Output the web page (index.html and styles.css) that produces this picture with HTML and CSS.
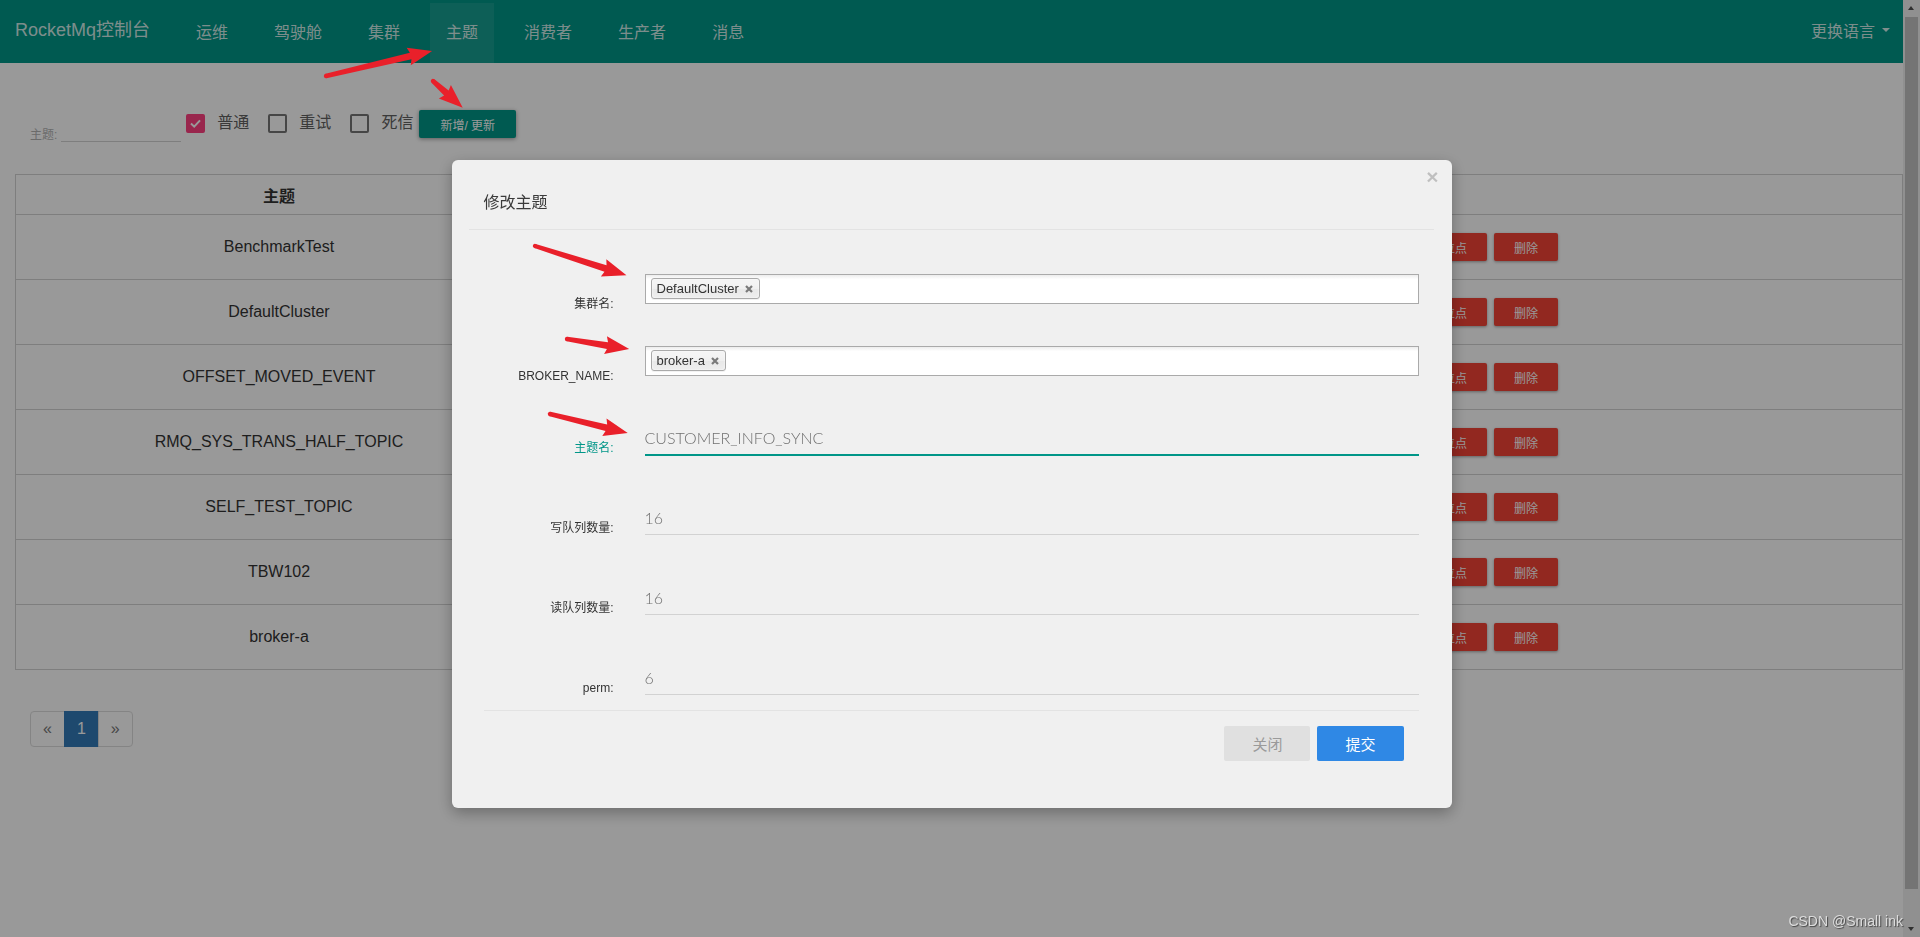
FILE: index.html
```html
<!DOCTYPE html>
<html lang="zh-CN">
<head>
<meta charset="utf-8">
<title>RocketMq控制台</title>
<link rel="stylesheet" href="styles.css">
</head>
<body>
<div class="page">
  <nav class="navbar">
    <a class="brand">RocketMq控制台</a>
    <ul class="nav">
      <li><a>运维</a></li>
      <li><a>驾驶舱</a></li>
      <li><a>集群</a></li>
      <li class="active"><a>主题</a></li>
      <li><a>消费者</a></li>
      <li><a>生产者</a></li>
      <li><a>消息</a></li>
    </ul>
    <a class="lang">更换语言<span class="caret"></span></a>
  </nav>

  <main class="content">
    <div class="toolbar">
      <div class="search">
        <label>主题:</label>
        <span class="search-line"></span>
      </div>
      <div class="checks">
        <div class="check">
          <span class="box on"><svg viewBox="0 0 15 15" width="15" height="15"><path d="M3 7.5 L6.2 10.6 L12 4.4" fill="none" stroke="#fff" stroke-width="2"/></svg></span>
          <span class="check-text">普通</span>
        </div>
        <div class="check">
          <span class="box"></span>
          <span class="check-text">重试</span>
        </div>
        <div class="check">
          <span class="box"></span>
          <span class="check-text">死信</span>
        </div>
      </div>
      <button class="btn-add">新增/ 更新</button>
    </div>

    <table class="topic-table">
      <thead>
        <tr><th class="col-topic">主题</th><th>操作</th></tr>
      </thead>
      <tbody>
        <tr><td>BenchmarkTest</td><td><div class="ops"><button class="btn-sm teal">状态</button><button class="btn-sm teal">路由</button><button class="btn-sm teal">Consumer管理</button><button class="btn-sm teal">Topic配置</button><button class="btn-sm teal">发送消息</button><button class="btn-sm red">重置消费位点</button><button class="btn-sm red">删除</button></div></td></tr>
        <tr><td>DefaultCluster</td><td><div class="ops"><button class="btn-sm teal">状态</button><button class="btn-sm teal">路由</button><button class="btn-sm teal">Consumer管理</button><button class="btn-sm teal">Topic配置</button><button class="btn-sm teal">发送消息</button><button class="btn-sm red">重置消费位点</button><button class="btn-sm red">删除</button></div></td></tr>
        <tr><td>OFFSET_MOVED_EVENT</td><td><div class="ops"><button class="btn-sm teal">状态</button><button class="btn-sm teal">路由</button><button class="btn-sm teal">Consumer管理</button><button class="btn-sm teal">Topic配置</button><button class="btn-sm teal">发送消息</button><button class="btn-sm red">重置消费位点</button><button class="btn-sm red">删除</button></div></td></tr>
        <tr><td>RMQ_SYS_TRANS_HALF_TOPIC</td><td><div class="ops"><button class="btn-sm teal">状态</button><button class="btn-sm teal">路由</button><button class="btn-sm teal">Consumer管理</button><button class="btn-sm teal">Topic配置</button><button class="btn-sm teal">发送消息</button><button class="btn-sm red">重置消费位点</button><button class="btn-sm red">删除</button></div></td></tr>
        <tr><td>SELF_TEST_TOPIC</td><td><div class="ops"><button class="btn-sm teal">状态</button><button class="btn-sm teal">路由</button><button class="btn-sm teal">Consumer管理</button><button class="btn-sm teal">Topic配置</button><button class="btn-sm teal">发送消息</button><button class="btn-sm red">重置消费位点</button><button class="btn-sm red">删除</button></div></td></tr>
        <tr><td>TBW102</td><td><div class="ops"><button class="btn-sm teal">状态</button><button class="btn-sm teal">路由</button><button class="btn-sm teal">Consumer管理</button><button class="btn-sm teal">Topic配置</button><button class="btn-sm teal">发送消息</button><button class="btn-sm red">重置消费位点</button><button class="btn-sm red">删除</button></div></td></tr>
        <tr><td>broker-a</td><td><div class="ops"><button class="btn-sm teal">状态</button><button class="btn-sm teal">路由</button><button class="btn-sm teal">Consumer管理</button><button class="btn-sm teal">Topic配置</button><button class="btn-sm teal">发送消息</button><button class="btn-sm red">重置消费位点</button><button class="btn-sm red">删除</button></div></td></tr>
      </tbody>
    </table>

    <ul class="pagination">
      <li><a>«</a></li>
      <li class="active"><a>1</a></li>
      <li><a>»</a></li>
    </ul>
  </main>
</div>

<div class="scrollbar">
  <span class="sb-up"></span>
  <span class="sb-thumb"></span>
  <span class="sb-down"></span>
</div>

<div class="backdrop"></div>

<div class="modal-wrap">
  <div class="modal">
    <div class="modal-header">
      <h4 class="modal-title">修改主题</h4>
    </div>
    <button class="close">×</button>
    <div class="modal-body">
      <div class="form-row select-row">
        <label class="form-label select-label">集群名:</label>
        <div class="multi-select">
          <span class="tag">DefaultCluster<svg class="tag-x" viewBox="0 0 8 8" width="8" height="8"><path d="M1 1 L7 7 M7 1 L1 7" stroke="#7a7a7a" stroke-width="2.2"/></svg></span>
        </div>
      </div>
      <div class="form-row select-row second">
        <label class="form-label select-label">BROKER_NAME:</label>
        <div class="multi-select">
          <span class="tag">broker-a<svg class="tag-x" viewBox="0 0 8 8" width="8" height="8"><path d="M1 1 L7 7 M7 1 L1 7" stroke="#7a7a7a" stroke-width="2.2"/></svg></span>
        </div>
      </div>
      <div class="form-row text-row first-text">
        <label class="form-label focused">主题名:</label>
        <input class="line-input is-focused" value="CUSTOMER_INFO_SYNC">
      </div>
      <div class="form-row text-row">
        <label class="form-label">写队列数量:</label>
        <input class="line-input" value="16">
      </div>
      <div class="form-row text-row">
        <label class="form-label">读队列数量:</label>
        <input class="line-input" value="16">
      </div>
      <div class="form-row text-row">
        <label class="form-label">perm:</label>
        <input class="line-input" value="6">
      </div>
    </div>
    <div class="modal-footer">
      <button class="btn-close">关闭</button>
      <button class="btn-submit">提交</button>
    </div>
  </div>
</div>

<svg class="annotations" width="1920" height="937" viewBox="0 0 1920 937">
  <g fill="#e9202a">
    <g transform="translate(326 76) rotate(-13.27)">
      <circle cx="0" cy="0" r="2.2"/>
      <path d="M0,-2.2 L87,-3.4 L85,-9 L109,0 L85,9 L87,3.4 L0,2.2 Z"/>
    </g>
    <g transform="translate(433 81) rotate(42)">
      <circle cx="0" cy="0" r="2.2"/>
      <path d="M0,-2.2 L18,-3.4 L16,-9 L40,0 L16,9 L18,3.4 L0,2.2 Z"/>
    </g>
    <g transform="translate(535 246) rotate(17.68)">
      <circle cx="0" cy="0" r="2.2"/>
      <path d="M0,-2.2 L74,-3.4 L72,-9 L96,0 L72,9 L74,3.4 L0,2.2 Z"/>
    </g>
    <g transform="translate(567 339) rotate(9.16)">
      <circle cx="0" cy="0" r="2.2"/>
      <path d="M0,-2.2 L41,-3.4 L39,-9 L63,0 L39,9 L41,3.4 L0,2.2 Z"/>
    </g>
    <g transform="translate(550 414) rotate(13.69)">
      <circle cx="0" cy="0" r="2.2"/>
      <path d="M0,-2.2 L58,-3.4 L56,-9 L80,0 L56,9 L58,3.4 L0,2.2 Z"/>
    </g>
  </g>
</svg>

<div class="watermark">CSDN @Small ink</div>
</body>
</html>
```

FILE: styles.css
```css
* {
  box-sizing: border-box;
}

html,
body {
  margin: 0;
  height: 100%;
  overflow: hidden;
}

body {
  font-family: "Liberation Sans", "Noto Sans CJK SC", sans-serif;
  color: #333;
  background: #fff;
}

.page {
  margin-right: 17px;
}

/* ---------- navbar ---------- */
.navbar {
  display: flex;
  height: 63px;
  background: #009688;
}

.brand {
  padding: 0 15px;
  line-height: 60px;
  font-size: 18px;
  color: rgba(255, 255, 255, 0.84);
  white-space: nowrap;
}

.nav {
  display: flex;
  gap: 14px;
  list-style: none;
  margin: 0 0 0 15px;
  padding: 0;
}

.nav li {
  margin-top: 3px;
  height: 60px;
}

.nav a {
  display: block;
  padding: 0 16px;
  line-height: 60px;
  font-size: 16px;
  color: rgba(255, 255, 255, 0.84);
}

.nav li.active a {
  background: rgba(255, 255, 255, 0.09);
}

.lang {
  margin-left: auto;
  display: flex;
  align-items: center;
  padding: 0 13px 0 16px;
  height: 60px;
  font-size: 16px;
  color: rgba(255, 255, 255, 0.84);
}

.caret {
  width: 0;
  height: 0;
  margin-left: 7px;
  border-top: 4px solid rgba(255, 255, 255, 0.84);
  border-left: 4px solid transparent;
  border-right: 4px solid transparent;
}

/* ---------- content ---------- */
.content {
  padding: 47px 0 0 15px;
}

.toolbar {
  display: flex;
  align-items: flex-start;
  height: 32px;
  padding-left: 15px;
}

.search {
  display: flex;
  align-items: flex-end;
  height: 20px;
  margin-top: 12px;
}

.search label {
  font-size: 12px;
  line-height: 14px;
  color: #b3b3b3;
}

.search-line {
  display: block;
  width: 120px;
  height: 20px;
  margin-left: 4px;
  border-bottom: 1px solid #d2d2d2;
}

.checks {
  display: flex;
  gap: 19px;
  margin-left: 5px;
}

.check {
  display: flex;
  align-items: center;
  height: 20px;
  margin-top: 3px;
}

.box {
  display: flex;
  align-items: center;
  justify-content: center;
  width: 19px;
  height: 19px;
  border: 2px solid rgba(0, 0, 0, 0.54);
  border-radius: 2px;
}

.box.on {
  background: #ff4081;
  border-color: #ff4081;
}

.check-text {
  margin-left: 12px;
  font-size: 16px;
  line-height: 20px;
  color: #616161;
}

.btn-add {
  height: 28px;
  margin-left: 6px;
  padding: 0 21px;
  border: 0;
  border-radius: 2px;
  background: #009688;
  color: #fff;
  font-family: inherit;
  font-size: 12px;
  box-shadow: 0 1px 4px rgba(0, 0, 0, 0.4);
}

.topic-table {
  width: 100%;
  margin-top: 32px;
  border-collapse: collapse;
  font-size: 16px;
  color: #333;
}

.topic-table th,
.topic-table td {
  border: 1px solid #d3d3d3;
  padding: 0;
  text-align: center;
}

.topic-table th {
  height: 40px;
  font-weight: bold;
}

.topic-table td {
  height: 65px;
}

.col-topic {
  width: 527px;
}

.ops {
  display: flex;
  justify-content: flex-end;
  gap: 7px;
  padding-right: 344px;
}

.btn-sm {
  height: 28px;
  padding: 0 20px;
  border: 0;
  border-radius: 2px;
  color: #fff;
  font-family: inherit;
  font-size: 12px;
  white-space: nowrap;
  box-shadow: 0 1px 3px rgba(0, 0, 0, 0.35);
}

.btn-sm.red {
  background: #f44336;
}

.btn-sm.teal {
  background: #009688;
}

.pagination {
  display: flex;
  list-style: none;
  margin: 41px 0 0 15px;
  padding: 0;
}

.pagination a {
  display: block;
  margin-left: -1px;
  padding: 6px 12px;
  border: 1px solid #ddd;
  background: #fff;
  color: #777;
  font-size: 16px;
  line-height: 22px;
}

.pagination li:first-child a {
  margin-left: 0;
  border-radius: 4px 0 0 4px;
}

.pagination li:last-child a {
  border-radius: 0 4px 4px 0;
}

.pagination li.active a {
  background: #337ab7;
  border-color: #337ab7;
  color: #fff;
}

/* ---------- fake scrollbar ---------- */
.scrollbar {
  position: fixed;
  top: 0;
  right: 0;
  width: 17px;
  height: 100%;
  background: #f1f1f1;
}

.sb-thumb {
  position: absolute;
  top: 17px;
  left: 2px;
  width: 13px;
  height: 872px;
  background: #c1c1c1;
}

.sb-up,
.sb-down {
  position: absolute;
  left: 5px;
  width: 0;
  height: 0;
  border-left: 3.5px solid transparent;
  border-right: 3.5px solid transparent;
}

.sb-up {
  top: 6px;
  border-bottom: 4px solid #505050;
}

.sb-down {
  bottom: 6px;
  border-top: 4px solid #505050;
}

/* ---------- modal ---------- */
.backdrop {
  position: fixed;
  inset: 0;
  background: rgba(0, 0, 0, 0.4);
}

.modal-wrap {
  position: fixed;
  top: 0;
  left: 0;
  right: 17px;
  bottom: 0;
  display: flex;
  justify-content: center;
  align-items: flex-start;
  padding-top: 160px;
}

.modal {
  position: relative;
  width: 1000px;
  background: #f0f0f0;
  border-radius: 6px;
  box-shadow: 0 5px 15px rgba(0, 0, 0, 0.3);
}

.modal-header {
  margin: 0 18px 0 17px;
  padding: 32px 15px 15px;
  border-bottom: 1px solid #e3e3e3;
}

.modal-title {
  margin: 0;
  font-size: 16px;
  font-weight: normal;
  line-height: 22px;
  color: #3a3a3a;
}

.close {
  position: absolute;
  top: 6px;
  right: 13px;
  padding: 0;
  border: 0;
  background: none;
  font-family: "Liberation Sans", sans-serif;
  font-size: 21px;
  font-weight: bold;
  line-height: 21px;
  color: #000;
  opacity: 0.2;
}

.modal-body {
  padding: 44px 33px 0 32px;
}

.form-row {
  display: flex;
  align-items: flex-start;
  gap: 31px;
}

.form-row.select-row {
  height: 30px;
}

.form-row.text-row {
  height: 35px;
}

.form-row.second {
  margin-top: 42px;
}

.form-row.first-text {
  margin-top: 44px;
}

.form-row.text-row:not(.first-text) {
  margin-top: 45px;
}

.form-label {
  flex: 0 0 130px;
  padding-top: 20px;
  font-size: 12px;
  line-height: 16px;
  text-align: right;
  color: #333;
}

.form-label.select-label {
  padding-top: 22px;
}

.form-label.focused {
  color: #009688;
}

.multi-select {
  flex: 1;
  height: 30px;
  padding: 3px 5px;
  border: 1px solid #aaa;
  background: linear-gradient(#eee 1%, #fff 15%);
}

.tag {
  display: inline-flex;
  align-items: center;
  height: 21px;
  padding: 0 6px 0 5px;
  border: 1px solid #aaa;
  border-radius: 3px;
  background: linear-gradient(#f4f4f4 20%, #f0f0f0 50%, #e8e8e8 52%, #eee);
  box-shadow: 0 0 2px #fff inset, 0 1px 0 rgba(0, 0, 0, 0.05);
  font-size: 13px;
  line-height: 19px;
  color: #333;
}

.tag-x {
  margin-left: 6px;
}

.line-input {
  flex: 1;
  height: 35px;
  padding: 0;
  border: 0;
  border-bottom: 1px solid #d2d2d2;
  background: transparent;
  font-family: Lato, "Open Sans", sans-serif;
  font-weight: 300;
  font-size: 16px;
  line-height: 34px;
  color: #707070;
  outline: none;
}

.line-input.is-focused {
  border-bottom-color: #009688;
  box-shadow: 0 1px 0 #009688;
}

.modal-footer {
  display: flex;
  justify-content: flex-end;
  gap: 7px;
  margin: 15px 33px 0 32px;
  padding: 15px 15px 47px;
  border-top: 1px solid #e3e3e3;
}

.btn-close,
.btn-submit {
  height: 35px;
  padding: 0 28px;
  border: 0;
  border-radius: 2px;
  font-family: inherit;
  font-size: 15px;
  white-space: nowrap;
}

.btn-close {
  background: #e0e0e0;
  color: #9a9a9a;
}

.btn-submit {
  background: #2f88e5;
  color: #fff;
}

/* ---------- annotations ---------- */
.annotations {
  position: fixed;
  top: 0;
  left: 0;
  pointer-events: none;
}

.watermark {
  position: fixed;
  right: 17px;
  bottom: 8px;
  font-size: 14px;
  line-height: 16px;
  color: #dcdcdc;
  text-shadow: 1px 1px 1px rgba(0, 0, 0, 0.55);
}
```
